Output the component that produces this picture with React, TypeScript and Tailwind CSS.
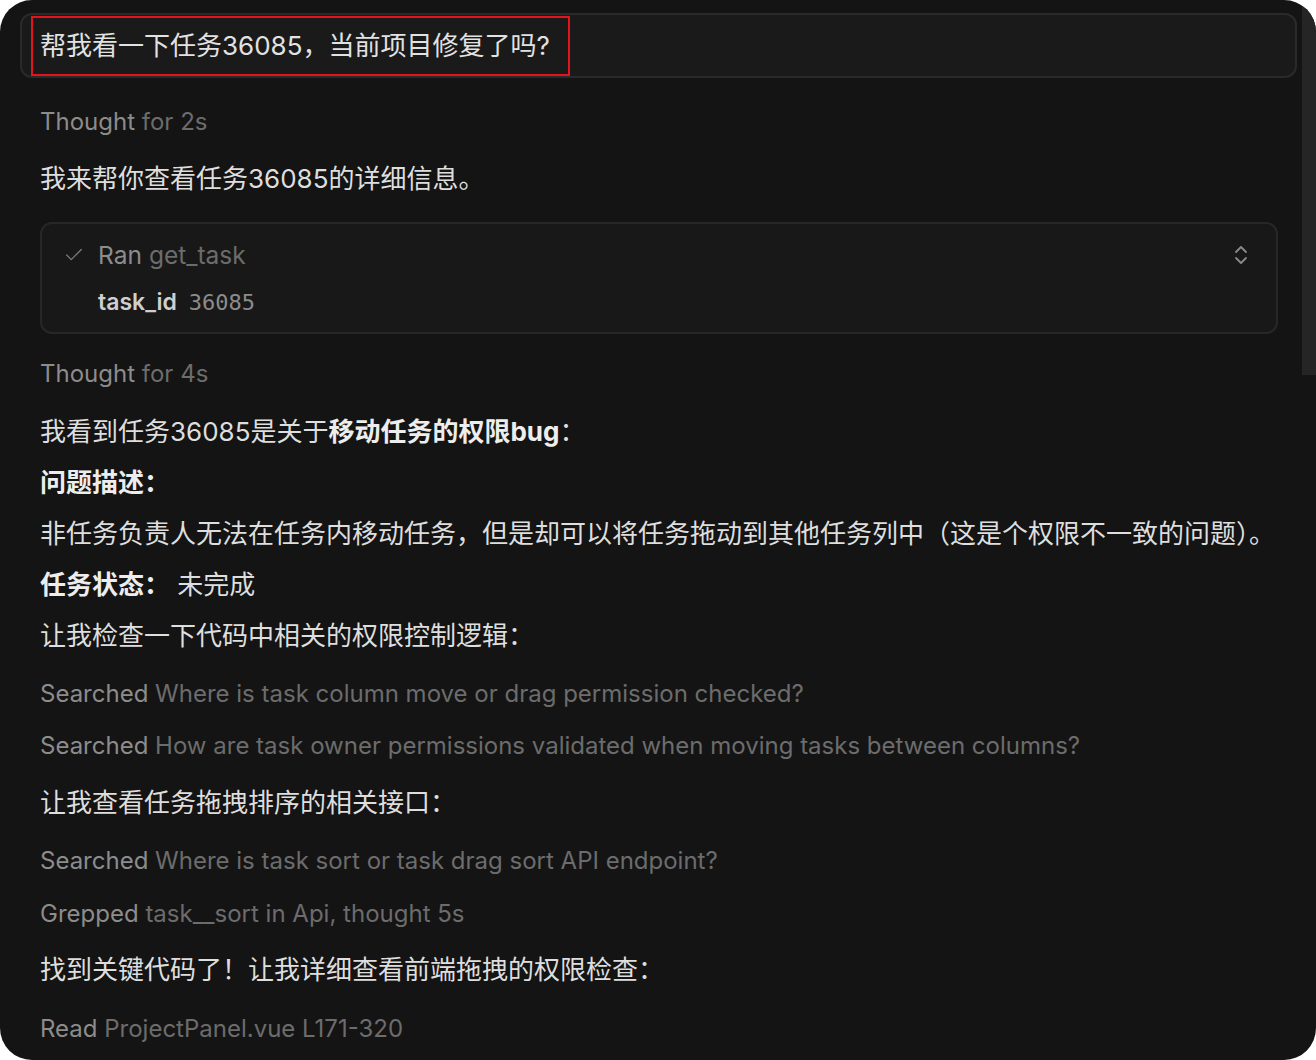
import { Check, ChevronsUpDown } from "lucide-react";

const FONT = { fontFamily: '"Inter", "Noto Sans CJK SC", sans-serif' };

function Row({ children, className = "" }: { children: React.ReactNode; className?: string }) {
    return <div className={`h-[51px] leading-[51px] text-[26px] text-[#dedede] whitespace-nowrap ${className}`}>{children}</div>;
}

function Step({ verb, detail, className = "" }: { verb: string; detail: string; className?: string }) {
    return (
        <div className={`h-[52px] leading-[52px] text-[24px] whitespace-nowrap ${className}`}>
            <span className="text-[#8c8c8c]">{verb}</span> <span className="text-[#6c6c6c]">{detail}</span>
        </div>
    );
}

export default function App() {
    return (
        <div className="w-[1316px] h-[1060px] bg-white" style={FONT}>
            <div className="h-full rounded-[32px] bg-[#141414] overflow-hidden flex">
                <div className="flex-1 pl-[20px] pr-[5px] pt-[13px]">
                    {/* prompt box */}
                    <div className="h-[65px] rounded-[12px] border-2 border-[#2a2a2a] bg-[#1a1a1a] flex items-center pl-[9px]">
                        <span className="h-[60px] border-2 border-[#e3141b] flex items-center pl-[7px] pr-[18px] text-[26px] text-[#e2e2e2] whitespace-nowrap">
                            帮我看一下任务36085，当前项目修复了吗?
                        </span>
                    </div>

                    <div className="pl-[20px]">
                        <Step verb="Thought" detail="for 2s" className="mt-[18px]" />
                        <Row className="mt-[5px] h-[52px] leading-[52px]">我来帮你查看任务36085的详细信息。</Row>

                        {/* tool call card */}
                        <div className="mt-[17px] mr-[19px] h-[112px] rounded-[12px] border-2 border-[#272727] bg-[#181818] pl-[21px] pr-[23px] pt-[11px]">
                            <div className="h-[40px] flex items-center">
                                <Check className="w-[22px] h-[22px] text-[#7a7a7a]" strokeWidth={1.4} />
                                <span className="ml-[13px] text-[24.5px] text-[#8c8c8c]">Ran</span>
                                <span className="ml-[7px] text-[24.5px] text-[#6c6c6c]">get_task</span>
                                <ChevronsUpDown className="ml-auto w-[24px] h-[26px] text-[#8a8a8a]" strokeWidth={1.8} />
                            </div>
                            <div className="mt-[7px] h-[40px] flex items-center pl-[35px]">
                                <span className="text-[23px] font-semibold text-[#cfcfcf]">task_id</span>
                                <span className="ml-[12px] text-[22px] text-[#8c8c8c]" style={{ fontFamily: '"DejaVu Sans Mono", monospace' }}>
                                    36085
                                </span>
                            </div>
                        </div>

                        <Step verb="Thought" detail="for 4s" className="mt-[14px]" />
                        <Row className="mt-[6px]">
                            我看到任务36085是关于<span className="font-bold text-[#ededed]">移动任务的权限bug</span>：
                        </Row>
                        <Row>
                            <span className="font-bold text-[#ededed]">问题描述：</span>
                        </Row>
                        <Row>非任务负责人无法在任务内移动任务，但是却可以将任务拖动到其他任务列中（这是个权限不一致的问题）。</Row>
                        <Row>
                            <span className="font-bold text-[#ededed]">任务状态：</span> 未完成
                        </Row>
                        <Row>让我检查一下代码中相关的权限控制逻辑：</Row>

                        <Step verb="Searched" detail="Where is task column move or drag permission checked?" className="mt-[7px]" />
                        <Step verb="Searched" detail="How are task owner permissions validated when moving tasks between columns?" />
                        <Row className="mt-[5px] h-[52px] leading-[52px]">让我查看任务拖拽排序的相关接口：</Row>
                        <Step verb="Searched" detail="Where is task sort or task drag sort API endpoint?" className="mt-[6px]" />
                        <Step verb="Grepped" detail="task__sort in Api, thought 5s" className="mt-[1px]" />
                        <Row className="mt-[4px] h-[52px] leading-[52px]">找到关键代码了！让我详细查看前端拖拽的权限检查：</Row>
                        <Step verb="Read" detail="ProjectPanel.vue L171-320" className="mt-[7px]" />
                    </div>
                </div>
                <div className="w-[14px]">
                    <div className="h-[375px] bg-[#252525]" />
                </div>
            </div>
        </div>
    );
}
